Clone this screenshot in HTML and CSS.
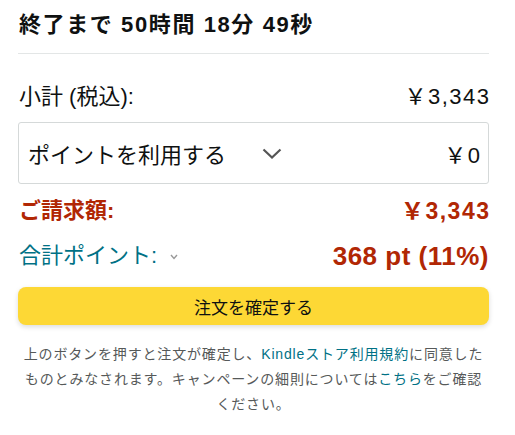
FILE: index.html
```html
<!DOCTYPE html>
<html lang="ja">
<head>
    <meta charset="UTF-8">
    <meta name="viewport" content="width=device-width, initial-scale=1.0">
    <title>注文の確定</title>
    <link rel="stylesheet" href="styles.css">
</head>
<body>
    <div class="summary">
        <h2 class="deadline">終了まで 50時間 18分 49秒</h2>

        <div class="row subtotal">
            <span>小計 (税込):</span>
            <span class="price">￥3,343</span>
        </div>

        <div class="points-select">
            <span class="label">ポイントを利用する</span>
            <svg class="chevron" width="20" height="11" viewBox="0 0 20 11">
                <polyline points="1.5,1.5 10,9.5 18.5,1.5" fill="none" stroke="#555" stroke-width="2.2"/>
            </svg>
            <span class="amount price">￥0</span>
        </div>

        <div class="row total">
            <span>ご請求額:</span>
            <span class="price">￥3,343</span>
        </div>

        <div class="row earned">
            <span class="earned-label">合計ポイント:<svg class="mini-chevron" width="8" height="6" viewBox="0 0 8 6">
                    <polyline points="1,1 4,4.5 7,1" fill="none" stroke="#999" stroke-width="1.4"/>
                </svg></span>
            <span class="earned-value">368 pt (11%)</span>
        </div>

        <button class="place-order">注文を確定する</button>

        <p class="notice">
            上のボタンを押すと注文が確定し、<a href="#">Kindleストア利用規約</a>に同意したものとみなされます。キャンペーンの細則については<a href="#">こちら</a>をご確認ください。
        </p>
    </div>
</body>
</html>
```

FILE: styles.css
```css
body {
    margin: 0;
    background-color: #ffffff;
    color: #0f1111;
    font-family: "Liberation Sans", "Noto Sans CJK JP", sans-serif;
}
.summary {
    padding: 10px 26px 0 18px;
}
.deadline {
    margin: 0;
    padding: 0 0 13px 1px;
    font-size: 22px;
    line-height: 30px;
    font-weight: 700;
    letter-spacing: 1.6px;
    border-bottom: 1px solid #e3e6e6;
}
.row {
    display: flex;
    justify-content: space-between;
    align-items: center;
    padding-left: 1px;
    line-height: 30px;
}
.price {
    letter-spacing: 1.5px;
    margin-right: -1.5px;
}
.subtotal {
    margin-top: 28px;
    font-size: 22px;
}
.points-select {
    display: flex;
    align-items: center;
    height: 60px;
    margin-top: 10px;
    padding: 0 8px 0 9px;
    border: 1px solid #d5d9d9;
    border-radius: 3px;
    font-size: 22px;
}
.points-select .chevron {
    margin-left: 36px;
}
.points-select .amount {
    margin-left: auto;
}
.total {
    margin-top: 12px;
    font-size: 23px;
    font-weight: 700;
    color: #b12704;
}
.total span:first-child {
    font-size: 22px;
}
.earned {
    margin-top: 15px;
}
.earned-label {
    font-size: 22px;
    color: #007185;
}
.mini-chevron {
    margin-left: 13px;
    vertical-align: middle;
}
.earned-value {
    font-size: 26px;
    font-weight: 700;
    letter-spacing: 0.5px;
    color: #b12704;
}
.place-order {
    display: block;
    width: 100%;
    height: 38px;
    margin-top: 16px;
    border: none;
    border-radius: 8px;
    background-color: #fdd835;
    box-shadow: 0 2px 5px rgba(15, 17, 17, 0.15);
    color: #0f1111;
    font-family: inherit;
    font-size: 17px;
}
.notice {
    margin: 17px 0 0;
    text-align: center;
    font-size: 14px;
    line-height: 25px;
    letter-spacing: 0.06em;
    color: #565959;
}
.notice a {
    color: #007185;
    text-decoration: none;
}
```
